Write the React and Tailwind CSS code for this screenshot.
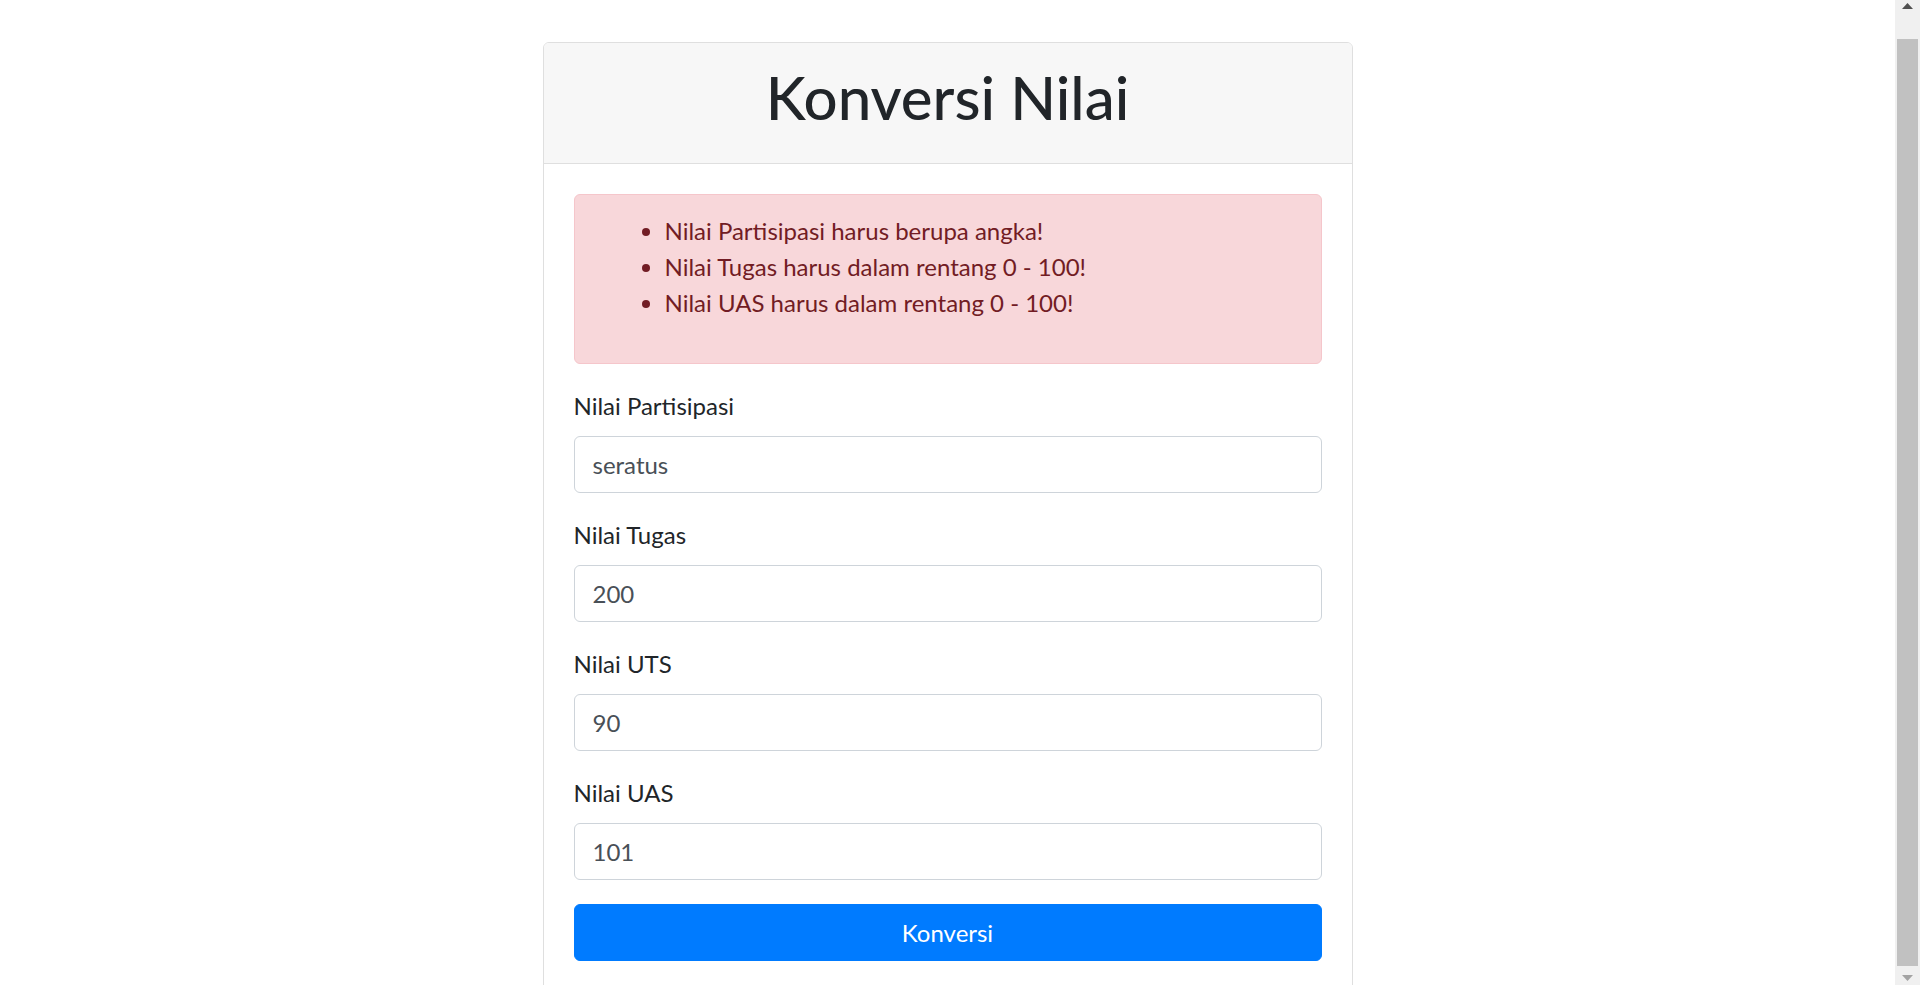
import React from 'react';

const errors = [
  'Nilai Partisipasi harus berupa angka!',
  'Nilai Tugas harus dalam rentang 0 - 100!',
  'Nilai UAS harus dalam rentang 0 - 100!',
];

const fields = [
  { label: 'Nilai Partisipasi', value: 'seratus' },
  { label: 'Nilai Tugas', value: '200' },
  { label: 'Nilai UTS', value: '90' },
  { label: 'Nilai UAS', value: '101' },
];

const App = () => {
  return (
    <div className="flex h-[985px] w-full overflow-hidden bg-white text-[#212529] font-['Lato','Liberation_Sans',sans-serif]">
      <div className="flex-1 overflow-hidden">
        <div className="mx-auto mt-[42px] w-[810px] rounded-[6px] border border-[#dfdfdf] bg-white">
          <div className="rounded-t-[5px] border-b border-[#dfdfdf] bg-[#f7f7f7] px-[30px] py-[18px]">
            <h1 className="mb-[12px] text-center text-[60px] font-medium leading-[72px]">Konversi Nilai</h1>
          </div>
          <div className="p-[30px]">
            <div className="mb-[24px] rounded-[6px] border border-[#f5c6cb] bg-[#f8d7da] px-[30px] py-[18px] text-[#721c24]">
              <ul className="mb-[24px] list-disc pl-[60px] text-[24px] leading-[36px]">
                {errors.map(e => (
                  <li key={e}>{e}</li>
                ))}
              </ul>
            </div>
            <form onSubmit={e => e.preventDefault()}>
              {fields.map(f => (
                <div key={f.label} className="mb-[24px]">
                  <label className="mb-[12px] block text-[24px] leading-[36px]">{f.label}</label>
                  <input
                    type="text"
                    defaultValue={f.value}
                    className="block h-[57px] w-full rounded-[6px] border border-[#ced4da] bg-white px-[18px] py-[9px] text-[24px] leading-[36px] text-[#495057] outline-none"
                  />
                </div>
              ))}
              <button
                type="submit"
                className="block h-[57px] w-full rounded-[6px] border border-[#007bff] bg-[#007bff] text-[24px] leading-[36px] text-white"
              >
                Konversi
              </button>
            </form>
          </div>
        </div>
      </div>
      {/* fake window scrollbar */}
      <div className="flex w-[25px] flex-col bg-[#f0f0f0] px-[2px]">
        <div className="flex h-[39px] justify-center pt-[3px]">
          <svg width="11" height="6" viewBox="0 0 11 6"><path d="M0 6 L5.5 0 L11 6 Z" fill="#505050" /></svg>
        </div>
        <div className="h-[927px] bg-[#c1c1c1]" />
        <div className="flex h-[19px] justify-center pt-[9px]">
          <svg width="11" height="6" viewBox="0 0 11 6"><path d="M0 0 L11 0 L5.5 6 Z" fill="#a3a3a3" /></svg>
        </div>
      </div>
    </div>
  );
};

export default App;
